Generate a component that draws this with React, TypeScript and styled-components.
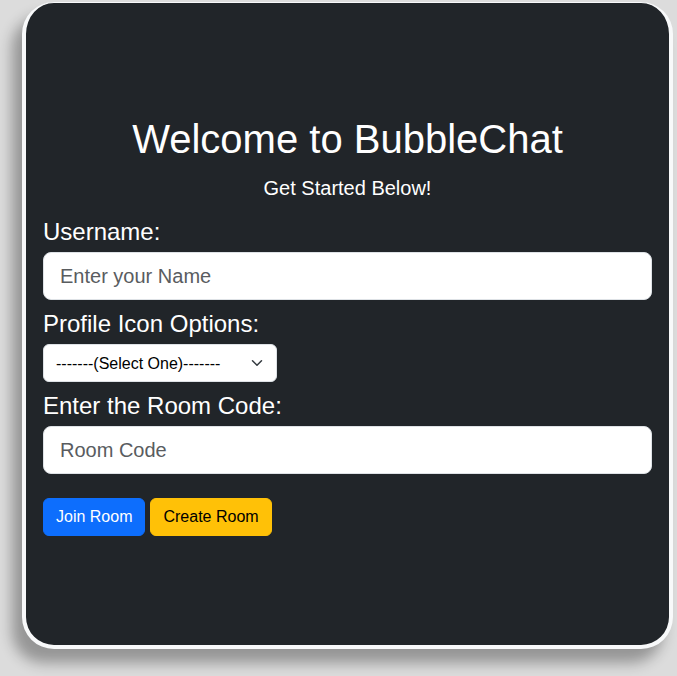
import React from "react";
import styled, { createGlobalStyle } from "styled-components";

const GlobalStyle = createGlobalStyle`
  html, body {
    margin: 0;
    padding: 0;
    background: #dcdcdc;
    font-family: "Liberation Sans", Arial, sans-serif;
    overflow: hidden;
  }
  * { box-sizing: border-box; }
`;

const Page = styled.div`
  width: 677px;
  height: 676px;
  padding: 2px 0 0 22px;
`;

const Card = styled.div`
  width: 651px;
  height: 647px;
  background: #212529;
  border: 4px solid #f8f9fa;
  border-top-width: 1px;
  border-radius: 32px;
  box-shadow: -10px 14px 14px rgba(0, 0, 0, 0.32);
  padding: 112px 17px 0 17px;
  color: #ffffff;
  display: flex;
  flex-direction: column;
`;

const Title = styled.h1`
  margin: 0;
  font-size: 40px;
  font-weight: 400;
  line-height: 48px;
  text-align: center;
`;

const Subtitle = styled.p`
  margin: 10px 0 0;
  font-size: 20px;
  line-height: 30px;
  text-align: center;
`;

const Label = styled.label<{ $first?: boolean }>`
  display: block;
  font-size: 24px;
  line-height: 36px;
  margin: ${(p) => (p.$first ? "11px 0 2px" : "6px 0 2px")};
`;

const TextInput = styled.input`
  display: block;
  width: 100%;
  height: 48px;
  padding: 8px 16px;
  font-family: "Liberation Sans", Arial, sans-serif;
  font-size: 20px;
  color: #212529;
  background: #fff;
  border: 1px solid #dee2e6;
  border-radius: 8px;
  outline: none;
  &::placeholder {
    color: #595c5f;
  }
`;

const SelectWrap = styled.div`
  position: relative;
  width: 234px;
  height: 38px;
`;

const Select = styled.select`
  appearance: none;
  width: 100%;
  height: 38px;
  padding: 6px 36px 6px 12px;
  font-family: "Liberation Sans", Arial, sans-serif;
  font-size: 16px;
  color: #000;
  background: #fff;
  border: 1px solid #dee2e6;
  border-radius: 6px;
  outline: none;
`;

const Chevron = styled.svg`
  position: absolute;
  right: 12px;
  top: 13px;
  width: 16px;
  height: 12px;
  pointer-events: none;
`;

const Buttons = styled.div`
  display: flex;
  gap: 5px;
  margin-top: 24px;
`;

const Button = styled.button<{ $variant: "primary" | "warning" }>`
  height: 38px;
  padding: 6px 12px;
  font-family: "Liberation Sans", Arial, sans-serif;
  font-size: 16px;
  line-height: 24px;
  border-radius: 6px;
  border: 1px solid ${(p) => (p.$variant === "primary" ? "#0d6efd" : "#ffc107")};
  background: ${(p) => (p.$variant === "primary" ? "#0d6efd" : "#ffc107")};
  color: ${(p) => (p.$variant === "primary" ? "#fff" : "#000")};
  cursor: pointer;
`;

export default function App() {
  return (
    <>
      <GlobalStyle />
      <Page>
        <Card>
          <Title>Welcome to BubbleChat</Title>
          <Subtitle>Get Started Below!</Subtitle>
          <Label $first htmlFor="username">Username:</Label>
          <TextInput id="username" placeholder="Enter your Name" />
          <Label htmlFor="icon">Profile Icon Options:</Label>
          <SelectWrap>
            <Select id="icon" defaultValue="">
              <option value="">-------(Select One)-------</option>
            </Select>
            <Chevron viewBox="0 0 16 16">
              <path d="M2 5l6 6 6-6" fill="none" stroke="#343a40" strokeWidth="2" strokeLinecap="round" strokeLinejoin="round" />
            </Chevron>
          </SelectWrap>
          <Label htmlFor="room">Enter the Room Code:</Label>
          <TextInput id="room" placeholder="Room Code" />
          <Buttons>
            <Button $variant="primary">Join Room</Button>
            <Button $variant="warning">Create Room</Button>
          </Buttons>
        </Card>
      </Page>
    </>
  );
}
